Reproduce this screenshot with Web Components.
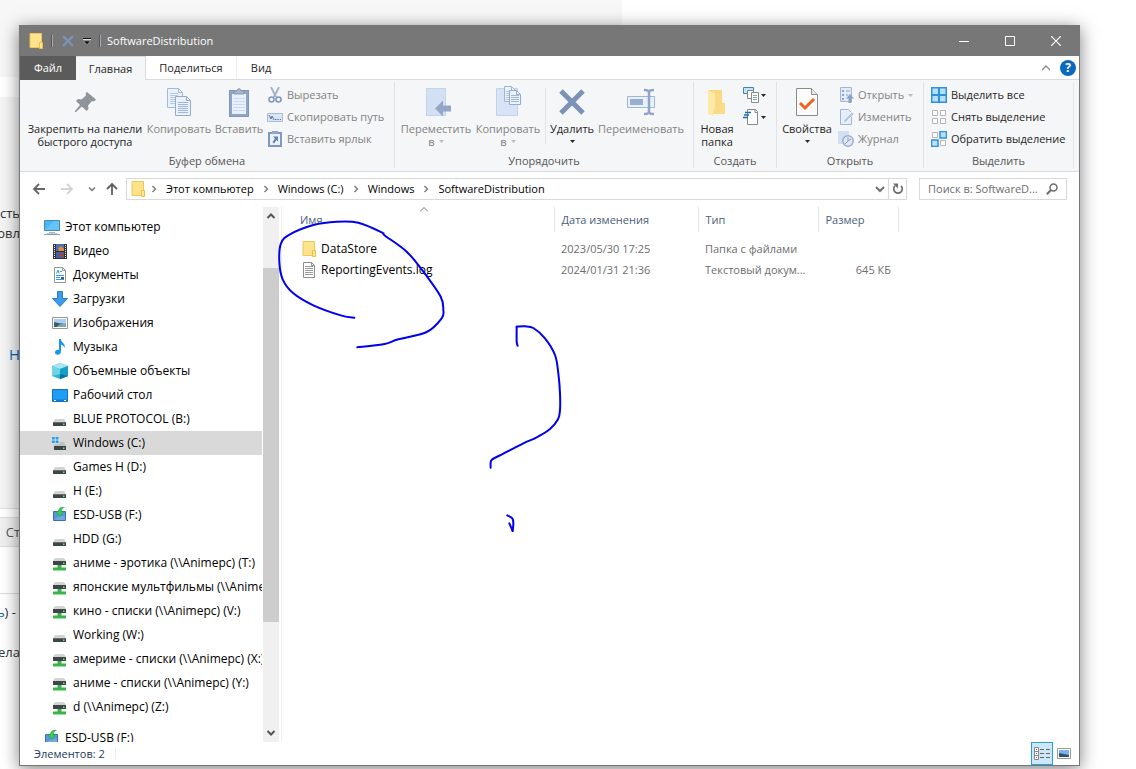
<!DOCTYPE html>
<html lang="ru">
<head>
<meta charset="utf-8">
<title>SoftwareDistribution</title>
<style>
  html, body { margin: 0; height: 100%; }
  body {
    display: grid; grid-template: minmax(0, 1fr) / minmax(0, 1fr);
    background: #fff; overflow: hidden;
    font: 11px/16px "Open Sans", "Noto Sans", sans-serif; color: #000;
  }
  body > * { grid-area: 1 / 1; }
  explorer-window { margin: 25px 56px 3px 19px; }
</style>
</head>
<body>
<page-backdrop></page-backdrop>
<explorer-window>
  <title-bar slot="title" heading="SoftwareDistribution"></title-bar>
  <ribbon-tabs slot="tabs"></ribbon-tabs>
  <ribbon-bar slot="ribbon">
    <ribbon-group label="Буфер обмена" style="--w:375px">
      <big-button icon="pin" label="Закрепить на панели|быстрого доступа" style="--w:120px"></big-button>
      <big-button icon="copy" label="Копировать" off style="--w:68px"></big-button>
      <big-button icon="paste" label="Вставить" off style="--w:52px"></big-button>
      <small-stack>
        <small-button icon="cut" label="Вырезать" off></small-button>
        <small-button icon="path" label="Скопировать путь" off></small-button>
        <small-button icon="shortcut" label="Вставить ярлык" off></small-button>
      </small-stack>
    </ribbon-group>
    <ribbon-group label="Упорядочить" style="--w:299px">
      <big-button icon="moveto" label="Переместить|в" arrow off style="--w:72px"></big-button>
      <big-button icon="copyto" label="Копировать|в" arrow off style="--w:72px"></big-button>
      <ribbon-line></ribbon-line>
      <big-button icon="delete" label="Удалить|" arrow style="--w:50px"></big-button>
      <big-button icon="rename" label="Переименовать" off style="--w:88px"></big-button>
    </ribbon-group>
    <ribbon-group label="Создать" style="--w:83px">
      <big-button icon="newfolder" label="Новая|папка" style="--w:36px"></big-button>
      <small-stack style="--m:8px">
        <small-button icon="newitem" name="Создать элемент" arrow></small-button>
        <small-button icon="easy" name="Простой доступ" arrow></small-button>
      </small-stack>
    </ribbon-group>
    <ribbon-group label="Открыть" style="--w:147px">
      <big-button icon="props" label="Свойства|" arrow style="--w:50px"></big-button>
      <small-stack style="--m:6px">
        <small-button icon="open" label="Открыть" arrow off></small-button>
        <small-button icon="edit" label="Изменить" off></small-button>
        <small-button icon="history" label="Журнал" off></small-button>
      </small-stack>
    </ribbon-group>
    <ribbon-group label="Выделить" style="--w:150px">
      <small-stack>
        <small-button icon="selall" label="Выделить все"></small-button>
        <small-button icon="selnone" label="Снять выделение"></small-button>
        <small-button icon="selinv" label="Обратить выделение"></small-button>
      </small-stack>
    </ribbon-group>
  </ribbon-bar>
  <address-row slot="address"></address-row>
  <nav-pane slot="nav">
    <nav-item icon="pc" root>Этот компьютер</nav-item>
    <nav-item icon="video">Видео</nav-item>
    <nav-item icon="docs">Документы</nav-item>
    <nav-item icon="down">Загрузки</nav-item>
    <nav-item icon="image">Изображения</nav-item>
    <nav-item icon="music">Музыка</nav-item>
    <nav-item icon="cube">Объемные объекты</nav-item>
    <nav-item icon="desktop">Рабочий стол</nav-item>
    <nav-item icon="drive">BLUE PROTOCOL (B:)</nav-item>
    <nav-item icon="windrive" selected>Windows (C:)</nav-item>
    <nav-item icon="drive">Games H (D:)</nav-item>
    <nav-item icon="drive">H (E:)</nav-item>
    <nav-item icon="usb">ESD-USB (F:)</nav-item>
    <nav-item icon="drive">HDD (G:)</nav-item>
    <nav-item icon="netdrive">аниме - эротика (\\Animepc) (T:)</nav-item>
    <nav-item icon="netdrive">японские мультфильмы (\\Animepc) (U:)</nav-item>
    <nav-item icon="netdrive">кино - списки (\\Animepc) (V:)</nav-item>
    <nav-item icon="drive">Working (W:)</nav-item>
    <nav-item icon="netdrive">америме - списки (\\Animepc) (X:)</nav-item>
    <nav-item icon="netdrive">аниме - списки (\\Animepc) (Y:)</nav-item>
    <nav-item icon="netdrive">d (\\Animepc) (Z:)</nav-item>
    <nav-item icon="usb" root gap>ESD-USB (F:)</nav-item>
  </nav-pane>
  <file-list slot="files"><ink-layer></ink-layer></file-list>
  <status-bar slot="status"></status-bar>
</explorer-window>

<script>
const define = (name, render) => customElements.define(name, class extends HTMLElement {
  connectedCallback() {
    if (this.shadowRoot) return;
    const root = this.attachShadow({ mode: 'open' });
    const t = document.createElement('template');
    t.innerHTML = '<style>:host,*{box-sizing:border-box}button{font:inherit;color:inherit;background:none;border:0;padding:0;margin:0;text-align:inherit}a{color:inherit;text-decoration:none}</style>' + render(this);
    root.append(t.content.cloneNode(true));
  }
});

/* Each icon: [width, height, markup] */
const drive = '<path d="M3 8h9l2 3H1z" fill="#d4d4d4"/><path d="M1 11h13v4H1z" fill="#3f4447"/><path d="M1 11h13v1H1z" fill="#6a6e70"/><path d="M11 12.500h1.500v1.500H11z" fill="#4f6"/>';
const netdrive = '<path d="M3 3h9l2 3H1z" fill="#d4d4d4"/><path d="M1 6h13v4H1z" fill="#3f4447"/><path d="M11 7.500h1.500v1.500H11z" fill="#4f6"/><path d="M5.500 10h4v2.500H14V15H1v-2.500h4.500z" fill="#39b54a"/><path d="M1 15h13v1H1z" fill="#9ed8a4"/>';
const usb = '<path d="M1.500 4.500h12v9h-12z" fill="#5b97d6" stroke="#3d70ad"/><path d="M3 12l4-3h6v4H3z" fill="#7fb4ea" opacity=".6"/><path d="M12.500 0C8 0 6.500 2 6.500 4.500H4L7.800 9.500l3.700-5H9.300C9.300 2.500 10 1.200 12.500 0z" fill="#35cf55" stroke="#1c9a3c" stroke-width=".6"/>';
const folder = '<path d="M1 .5h11.500v14H1z" fill="#ffe28c" stroke="#ecc85a"/><path d="M10.500 9.500h3v6h-3z" fill="#ffe79d" stroke="#ecbf3f"/>';
const sheet = (x, y, w, h, f, s, c = 4) => `<path d="M${x} ${y}h${w - c}l${c} ${c}v${h - c}h-${w}z" fill="${f}" stroke="${s}"/><path d="M${x + w - c} ${y}v${c}h${c}" fill="none" stroke="${s}"/>`;
const lines = (x, y, w, n, s, step = 2) => Array.from({ length: n }, (_, i) => `<path d="M${x} ${y + i * step}h${w}" stroke="${s}"/>`).join('');
const I = {
  folder: [14, 16, folder],
  pin: [32, 32, '<path d="M18 6l9 7.500-2 2-2-.500-4 4.500.500 3.500-2 2-4.700-4.500L7 26H6v-1l5-6-4-4 2-2 3.500.500 4.500-4-.500-2z" fill="#8f949a"/>'],
  copy: [32, 32, sheet(4.5, 2.5, 15, 19, '#eaf1fb', '#a5bad6') + lines(7, 7.5, 8, 6, '#b9cbe4') + sheet(12.5, 10.5, 15, 19, '#eaf1fb', '#94abcb') + lines(15, 16.5, 10, 6, '#9fb6d8')],
  paste: [32, 32, '<rect x="6.500" y="4.500" width="19" height="26" fill="#8ea4c8" stroke="#7f97bd"/><path d="M9 8h14v20H9z" fill="#e9f1fc"/>' + lines(10, 12.5, 12, 5, '#c9d9ef', 3) + '<path d="M11 8V5h3c0-3 4-3 4 0h3v3z" fill="#a9b7cd" stroke="#8698b5"/>'],
  cut: [16, 16, '<path d="M4 0l5 10M12 0L7 10" stroke="#9fb1cd" stroke-width="1.800"/><circle cx="4.500" cy="12.500" r="2.500" fill="none" stroke="#8298bd" stroke-width="1.600"/><circle cx="11.500" cy="12.500" r="2.500" fill="none" stroke="#8298bd" stroke-width="1.600"/>'],
  path: [16, 16, '<path d="M.5 4.500h15v8H.5z" fill="#dbe6f5" stroke="#a9bbd6"/><path d="M2 6l2 4 1-3 2 4M8 10.500h1.500M10.500 10.500H12M13 10.500h1" fill="none" stroke="#5d779f"/>'],
  shortcut: [16, 16, '<path d="M2 2h12v13H2z" fill="#e9f1fc" stroke="#8099c1" stroke-width="2"/><path d="M5 0h6v3H5z" fill="#90a5c8"/><path d="M6 5.500h5v5L9.500 9 7 12.500 5.500 11 8 7.500z" fill="#6480ad"/>'],
  moveto: [32, 32, '<path d="M6 2h20v28H6z" fill="#d3e0f4"/><path d="M6.500 2.500h19v27h-19z" fill="none" stroke="#c3d3ec"/><path d="M15 22.500l8-8v5h8v6h-8v5z" fill="#93a7c9"/>'],
  copyto: [32, 32, '<path d="M4.500 2.500h21v27h-21z" fill="#d8e4f6" stroke="#c3d3ec"/>' + sheet(12.5, .5, 11, 15, '#edf3fc', '#9fb3d2') + lines(14, 5.5, 7, 5, '#b0c3df') + sheet(17.5, 4.5, 11, 14, '#edf3fc', '#94abcb') + lines(19, 9.5, 8, 4, '#9fb6d8')],
  delete: [32, 32, '<path d="M5 5l22 22M27 5L5 27" stroke="#7c92b7" stroke-width="5"/>'],
  rename: [32, 32, '<path d="M2.500 10.500h27v11h-27z" fill="#e9f1fc" stroke="#9fb5d6"/><path d="M5 13h13v6H5z" fill="#98aed2"/><path d="M19 4c3 0 5 0 5 3v18c0 3-2 3-5 3M29 4c-3 0-5 0-5 3v18c0 3 2 3 5 3" fill="none" stroke="#8ea4c8" stroke-width="2.500"/>'],
  newfolder: [32, 32, '<path d="M7 4h14v13h3v11H9z" fill="#f9d77c"/><path d="M7 4l7 3v16l-2 7-5-2z" fill="#ffe9a6"/><path d="M14 7h7v10l3 2v9H12l2-5z" fill="#fadb85"/>'],
  newitem: [16, 16, '<path d="M.5.500h10v6H.5z" fill="#bfe3f7" stroke="#3a86b5"/><path d="M4.500 3.500h6v8h-6z" fill="#fff" stroke="#8a8a8a"/><path d="M8.500 5.500h7v10h-7z" fill="#fff" stroke="#8a8a8a"/><path d="M10 8.500h4M10 10.500h4M10 12.500h4" stroke="#6fb0a8"/>'],
  easy: [16, 16, '<path d="M4.500.500h8l2 2v13h-10z" fill="#fff" stroke="#8a8a8a"/><path d="M12 .5v3h3" fill="none" stroke="#8a8a8a"/><path d="M2 3.500h6M1 6h5M0 8.500h5" stroke="#1b6fae" stroke-width="1.500"/>'],
  props: [32, 32, '<path d="M5.500 2.500h15l6 6v21h-21z" fill="#fbfbfb" stroke="#8c8c8c"/><path d="M20.500 2.500v6h6" fill="#e6e6e6" stroke="#8c8c8c"/><path d="M9 17l5 5 9-9" fill="none" stroke="#f0621e" stroke-width="3"/>'],
  open: [16, 16, '<path d="M2.500.500h11v14h-11z" fill="#e3ecf9" stroke="#a4b6d3"/><path d="M4 3h2v2H4zM4 7h2v2H4zM4 11h2v2H4zM8 3.500h4v1H8zM8 7.500h2v1H8z" fill="#8ea4c8"/><path d="M12 7l4 4.500h-2.500V16h-3v-4.500H8z" fill="#8ba1c6"/>'],
  edit: [16, 16, '<path d="M2.500.500h8l3 3v12h-11z" fill="#e5eefa" stroke="#a0b4d4"/><path d="M5 14l1-3 8-8 2 2-8 8z" fill="#b3c5e0" stroke="#fff" stroke-width=".6"/>'],
  history: [16, 16, '<path d="M0 0h11v13H0z" fill="#d3e0f3"/><circle cx="10" cy="10" r="5.200" fill="#dfe7f3" stroke="#9dafcd" stroke-width="1.500"/><path d="M7 13l3-3V6.500M10 10l3-2" fill="none" stroke="#8c9fc0"/>'],
  selall: [16, 16, '<path d="M0 0h16v16H0z" fill="#2f8fe0"/><path d="M1.500 1.500h5.500v5.500h-5.500zM9 1.500h5.500v5.500H9zM1.500 9h5.500v5.500h-5.500zM9 9h5.500v5.500H9z" fill="#b5e1ff"/>'],
  selnone: [16, 16, '<path d="M1.500 1.500h5v5h-5zM9.500 1.500h5v5h-5zM1.500 9.500h5v5h-5zM9.500 9.500h5v5h-5z" fill="#fff" stroke="#b4b4b4"/>'],
  selinv: [16, 16, '<path d="M1.500 1.500h5v5h-5zM9.500 9.500h5v5h-5z" fill="#fff" stroke="#b4b4b4"/><path d="M9 .5h6.500V7H9zM.5 9H7v6.500H.5z" fill="#b5e1ff" stroke="#2f8fe0" stroke-width="1.500"/>'],
  pc: [16, 16, '<path d="M.5 1.500h15v10H.5z" fill="#4fb5f2" stroke="#3e8fae"/><path d="M1 11L10 2h5v9z" fill="#7accfa" opacity=".6"/><path d="M5 13h6v1H5z" fill="#a7b4bd"/><path d="M0 15h16v1H0z" fill="#8b98a5"/><path d="M3 14h10v1H3z" fill="#c6ced4"/>'],
  video: [16, 16, '<path d="M1 1h14v15H1z" fill="#333"/><path d="M4 1h8v7H4z" fill="#4b6fb5"/><path d="M4 9h8v6H4z" fill="#3d62ab"/><path d="M6 5l3-2 3 3v2H7z" fill="#e2883f"/><path d="M6 13l3-3 3 2v2z" fill="#a8442e"/><path d="M2.500 2v14M13.500 2v14" stroke="#eee" stroke-dasharray="1 1"/>'],
  docs: [16, 16, sheet(2.5, .5, 11, 15, '#fff', '#8f979d', 3) + '<path d="M4.500 6.500L6 3l1 3.500M8 4.500h2M4 8.500h8M4 12.500h8M4 10.500h4" fill="none" stroke="#2f9bd8"/><path d="M9 10h3v2H9z" fill="#555"/>'],
  down: [16, 16, '<path d="M5.500.500h5v7h5L8 15.500.5 7.500h5z" fill="#3d9be9" stroke="#2a7cc4"/>'],
  image: [16, 16, '<path d="M.5 2.500h15v11H.5z" fill="#fff" stroke="#969696"/><path d="M2 4h12v8H2z" fill="#a9cdf3"/><path d="M2 7l4 1 8 1v3H2z" fill="#3a5d68"/><path d="M7 9.500l7-1V12H5z" fill="#7fa8ae"/>'],
  music: [16, 16, '<path d="M7 0h2c0 4 5 4 3.500 9-.5-2-2-3-3.500-3.500V12c0 5-6 4.500-6 1.500 0-2 2-3 4-2.500z" fill="#1398ee"/>'],
  cube: [16, 16, '<path d="M8 0l8 3v10l-8 3-8-3V3z" fill="#29b6d3"/><path d="M8 0l8 3-8 3-8-3z" fill="#a8e6f0"/><path d="M8 6l8-3v10l-8 3z" fill="#169fc6"/><path d="M0 3l8 3v5l-8 2z" fill="#6fd3e4"/><path d="M8 11l8 2-8 3z" fill="#0b6f9d"/>'],
  desktop: [16, 16, '<path d="M.5 2.500h15v12H.5z" fill="#1e9df3" stroke="#1272bd"/><path d="M1 12.500h14v2H1z" fill="#1479c9"/><path d="M2 13.500h2M12 13.500h2" stroke="#fff"/>'],
  drive: [16, 16, drive],
  windrive: [16, 16, '<path d="M4 7h8l2 4H2z" fill="#c0c0c0"/><path d="M2 11h12v4H2z" fill="#3f4447"/><path d="M11 12.500h1.500v1.500H11z" fill="#4f6"/><path d="M-.5 2h8v7h-8z" fill="#d9d9d9"/><path d="M0 2h2.700v2.500H0zM3.700 2h2.700v2.500H3.700zM0 5.500h2.700V8H0zM3.700 5.500h2.700V8H3.700z" fill="#16a1f2"/>'],
  netdrive: [16, 16, netdrive],
  usb: [16, 16, usb],
  log: [14, 16, sheet(1.5, .5, 11, 15, '#fff', '#8f8f8f', 3) + lines(3, 4.5, 8, 5, '#9a9a9a')],
  back: [14, 14, '<path d="M13 7H2M7 2L2 7l5 5" fill="none" stroke="#666" stroke-width="1.800"/>'],
  fwd: [14, 14, '<path d="M1 7h11M7 2l5 5-5 5" fill="none" stroke="#d4d4d4" stroke-width="1.800"/>'],
  up: [14, 14, '<path d="M7 13V2M2 7l5-5 5 5" fill="none" stroke="#5f5f5f" stroke-width="1.800"/>'],
  vsmall: [8, 8, '<path d="M1 2.500l3 3 3-3" fill="none" stroke="#777" stroke-width="1.500"/>'],
  crumb: [8, 8, '<path d="M2.500 1l3 3-3 3" fill="none" stroke="#777" stroke-width="1.400"/>'],
  vbig: [10, 8, '<path d="M1 2l4 4 4-4" fill="none" stroke="#707070" stroke-width="2"/>'],
  refresh: [12, 12, '<path d="M3 2.800a4.300 4.300 0 1 0 6 0" fill="none" stroke="#6d6d6d" stroke-width="1.700"/><path d="M1 .5h5V5.500z" fill="#6d6d6d"/>'],
  find: [12, 12, '<circle cx="7.500" cy="4.500" r="3.500" fill="none" stroke="#6d6d6d" stroke-width="1.500"/><path d="M5 7L.8 11.200" stroke="#6d6d6d" stroke-width="2"/>'],
  tri: [5, 3, '<path d="M0 0h5L2.500 3z" fill="currentColor"/>'],
  x: [14, 14, '<path d="M2 2l10 10M12 2L2 12" stroke="#7c92b9" stroke-width="2.400"/>'],
  qat: [8, 8, '<path d="M0 1.500h8" stroke="#111"/><path d="M0 2.500h8" stroke="#ddd"/><path d="M.5 4h7L4 7.500z" fill="#000" stroke="#ddd" stroke-width=".5"/>'],
  min: [10, 10, '<path d="M0 5.500h10" stroke="#fff"/>'],
  max: [10, 10, '<path d="M.5.500h9v9h-9z" fill="none" stroke="#fff"/>'],
  close: [10, 10, '<path d="M0 0l10 10M10 0L0 10" stroke="#fff" stroke-width="1.200"/>'],
  caret: [8, 8, '<path d="M0 6l4-4 4 4" fill="none" stroke="#8c8c8c" stroke-width="1.300"/>'],
  sort: [8, 5, '<path d="M0 4.500l4-4 4 4" fill="none" stroke="#777"/>'],
  sup: [10, 10, '<path d="M1.500 7L5 3.500 8.500 7" fill="none" stroke="#555" stroke-width="2"/>'],
  sdown: [10, 10, '<path d="M1.500 3L5 6.500 8.500 3" fill="none" stroke="#555" stroke-width="2"/>'],
  details: [16, 14, '<path d="M.5.500h4v12h-4zM.5 4.500h4M.5 8.500h4" fill="#fff" stroke="#888"/><path d="M6 2.500h4M12 2.500h4M6 6.500h4M12 6.500h4M6 10.500h4M12 10.500h4" stroke="#666"/><path d="M2 2h1v1H2zM2 6h1v1H2zM2 10h1v1H2z" fill="#b4504b"/>'],
  thumbs: [14, 11, '<path d="M.5.500h13v10H.5z" fill="#fff" stroke="#999"/><path d="M2 2h10v7H2z" fill="#7db2f2"/><path d="M2 5l10 2v2H2z" fill="#2c5566"/>'],
};
define('x-icon', el => {
  const [w, h, m] = I[el.getAttribute('name')];
  return `<style>:host{display:block;flex:none;width:${w}px;height:${h}px}svg{display:block}</style><svg width="${w}" height="${h}" viewBox="0 0 ${w} ${h}" aria-hidden="true">${m}</svg>`;
});

define('page-backdrop', () => `<style>
  :host{display:grid;grid-template-rows:77px 20px 412px 8px 30px 46px 1fr;color:#333;font-size:13px;line-height:20px;overflow:hidden}
  .top{background:#f7f7f7;width:622px}
  .strip{width:20px;overflow:hidden;display:flex;flex-direction:column;align-items:flex-end;white-space:nowrap}
  .body{background:#f5f5f5;padding-top:106px;border-bottom:1px solid #e0e0e0}
  .link{color:#0067b8;font-size:15px;margin-top:101px}
  .tab{background:#f0f0f0;border:1px solid #ddd;border-width:1px 0;justify-content:center;color:#555}
  .post{border-top:1px solid #ddd;padding-top:8px}
  .dash{margin-right:4px}.dash a{color:#0067b8}.more{margin-top:20px}
</style><div class="top"></div><div></div>
<div class="strip body"><span>сть</span><span>овл</span><a class="link" href="#">Н</a></div><div></div>
<div class="strip tab"><span>Ст</span></div><div></div>
<div class="strip post"><span class="dash"><a href="#">ь</a>) -</span><span class="more">ела</span></div>`);

define('explorer-window', () => `<style>
  :host{display:flex;flex-direction:column;min-height:0;position:relative;background:#fff;border:1px solid #777;border-top:0;box-shadow:0 3px 16px rgba(0,0,0,.5)}
  main{flex:1;min-height:0;display:grid;grid-template:minmax(0,1fr) / 259px minmax(0,1fr);padding-top:1px}
  ::slotted(:not([slot=nav]):not([slot=files])){flex:none}
</style><slot name="title"></slot><slot name="tabs"></slot><slot name="ribbon"></slot><slot name="address"></slot>
<main><slot name="nav"></slot><slot name="files"></slot></main><slot name="status"></slot>`);

define('title-bar', el => `<style>
  :host{display:flex;align-items:center;height:31px;background:#777;color:#fff;padding-left:9px}
  .quick{display:flex;align-items:center;gap:8px}
  i{width:2px;height:12px;background:#555;border-right:1px solid #aaa}
  h1{font:inherit;margin:0 auto 0 6px}
  .ctl{width:46px;height:31px;display:grid;place-items:center}
  button{display:block}
</style><div class="quick"><x-icon name="folder"></x-icon><i></i><button aria-label="Удалить"><x-icon name="x"></x-icon></button><button aria-label="Настройка панели"><x-icon name="qat"></x-icon></button><i></i></div>
<h1>${el.getAttribute('heading')}</h1>
<button class="ctl" aria-label="Свернуть"><x-icon name="min"></x-icon></button><button class="ctl" aria-label="Развернуть"><x-icon name="max"></x-icon></button><button class="ctl" aria-label="Закрыть"><x-icon name="close"></x-icon></button>`);

define('ribbon-tabs', () => `<style>
  :host{display:flex;height:24px;background:linear-gradient(#dadbdc,#dadbdc) bottom/100% 1px no-repeat #fff}
  button{height:24px;text-align:center;color:#262626}
  .file{width:56px;background:#5b5b5b;color:#fff}
  .on{width:70px;background:#f5f6f7;border:1px solid #dadbdc;border-width:1px 1px 0 0}
  .share{width:91px;border:1px solid #ececec;border-width:0 1px 0 0;height:23px}
  .view{width:48px}
  .end{margin-left:auto;display:flex;align-items:center;gap:10px;padding-right:3px;height:23px}
  .end button{height:8px}
  .end .help{width:16px;height:16px;border-radius:50%;background:#0b69bd;color:#fff;font-weight:700;font-size:12px;line-height:16px}
</style><button class="file">Файл</button><button class="on">Главная</button><button class="share">Поделиться</button><button class="view">Вид</button>
<div class="end"><button aria-label="Свернуть ленту"><x-icon name="caret"></x-icon></button><button class="help">?</button></div>`);

define('ribbon-bar', () => `<style>:host{display:flex;height:92px;background:#f5f6f7;border-bottom:1px solid #dadbdc;padding:2px 0 3px}</style><slot></slot>`);
define('ribbon-group', el => `<style>
  :host{display:flex;flex-direction:column;flex:none;width:var(--w);border-right:1px solid #e2e3e4}
  .items{display:flex;flex:1;padding:2px 5px 0;min-height:0}
  footer{text-align:center;color:#555;line-height:14px;white-space:nowrap}
</style><div class="items"><slot></slot></div><footer>${el.getAttribute('label')}</footer>`);
define('ribbon-line', () => `<style>:host{display:block;width:1px;height:56px;background:#e2e3e4;margin:4px 1px 0}</style>`);
define('small-stack', () => `<style>:host{display:flex;flex-direction:column;margin-left:var(--m,2px)}</style><slot></slot>`);
define('big-button', el => {
  const [a, b] = el.getAttribute('label').split('|'), off = el.hasAttribute('off');
  return `<style>:host{display:block;width:var(--w);padding-top:2px;color:${off ? '#838383' : '#262626'};flex:none}
  button{display:flex;flex-direction:column;align-items:center;width:100%;white-space:nowrap;line-height:13px}
  .l{margin-top:4px}.s{display:flex;align-items:center;gap:4px;height:13px}
  x-icon[name=tri]{opacity:${off ? .5 : 1}}</style>
  <button ${off ? 'disabled' : ''}><x-icon name="${el.getAttribute('icon')}"></x-icon><span class="l">${a}</span>${b !== undefined ? `<span class="s">${b}${el.hasAttribute('arrow') ? '<x-icon name="tri"></x-icon>' : ''}</span>` : ''}</button>`;
});
define('small-button', el => {
  const off = el.hasAttribute('off'), l = el.getAttribute('label');
  return `<style>:host{display:block;color:${off ? '#838383' : '#262626'}}
  button{display:flex;align-items:center;gap:${l ? 4 : 2}px;height:22px;white-space:nowrap}
  x-icon[name=tri]{opacity:${off ? .5 : 1}}</style>
  <button ${off ? 'disabled' : ''} ${l ? '' : `aria-label="${el.getAttribute('name')}"`}><x-icon name="${el.getAttribute('icon')}"></x-icon>${l ? `<span>${l}</span>` : ''}${el.hasAttribute('arrow') ? '<x-icon name="tri"></x-icon>' : ''}</button>`;
});

define('address-row', () => `<style>
  :host{display:flex;align-items:center;height:34px;padding:0 12px}
  .nav{display:flex;align-items:center;width:94px;gap:14px}
  .nav button:nth-child(3){margin-right:-5px}
  .box{flex:1;display:flex;align-items:center;height:22px;border:1px solid #d9d9d9;padding-left:4px}
  .box>x-icon{margin-right:5px}
  nav{display:flex;align-items:center;gap:8px;flex:1;white-space:nowrap}
  .re{width:18px;height:20px;border-left:1px solid #d9d9d9;display:grid;place-items:center;margin-left:3px}
  label{display:flex;align-items:center;width:148px;height:22px;border:1px solid #d9d9d9;margin-left:12px;padding:0 8px}
  input{font:inherit;color:#6d6d6d;border:0;outline:0;padding:0;width:100%;min-width:0;background:none}
  input::placeholder{color:#6d6d6d;opacity:1}
</style><div class="nav"><button aria-label="Назад"><x-icon name="back"></x-icon></button><button aria-label="Вперед"><x-icon name="fwd"></x-icon></button><button aria-label="Последние"><x-icon name="vsmall"></x-icon></button><button aria-label="Вверх"><x-icon name="up"></x-icon></button></div>
<div class="box"><x-icon name="folder"></x-icon><nav><x-icon name="crumb"></x-icon><a href="#">Этот компьютер</a><x-icon name="crumb"></x-icon><a href="#">Windows (C:)</a><x-icon name="crumb"></x-icon><a href="#">Windows</a><x-icon name="crumb"></x-icon><a href="#">SoftwareDistribution</a></nav>
<button aria-label="Журнал адресов"><x-icon name="vbig"></x-icon></button><button class="re" aria-label="Обновить"><x-icon name="refresh"></x-icon></button></div>
<label><input type="text" aria-label="Поиск" placeholder="Поиск в: SoftwareD..."><x-icon name="find"></x-icon></label>`);

define('nav-pane', () => `<style>
  :host{display:grid;grid-template:minmax(0,1fr) / 242px 16px;gap:1px;font-size:12px}
  .tree{overflow:hidden;padding-top:8px}
  .bar{background:#f0f0f0;display:grid;grid-template-rows:61px 354fr 120fr;justify-items:center}
  .thumb{background:#cdcdcd;width:16px}
  button{width:16px;height:18px;display:grid;place-items:center}
  .dn{align-self:end}
</style><div class="tree"><slot></slot></div><div class="bar"><button aria-label="Вверх"><x-icon name="sup"></x-icon></button><div class="thumb"></div><button class="dn" aria-label="Вниз"><x-icon name="sdown"></x-icon></button></div>`);
define('nav-item', el => `<style>
  :host{display:block;margin-top:${el.hasAttribute('gap') ? 7 : 0}px;background:${el.hasAttribute('selected') ? '#d9d9d9' : 'none'}}
  a{display:flex;align-items:center;gap:5px;height:24px;white-space:nowrap;padding-left:${el.hasAttribute('root') ? 24 : 32}px}
</style><a href="#"><x-icon name="${el.getAttribute('icon')}"></x-icon><span><slot></slot></span></a>`);

define('file-list', () => `<style>
  :host{display:block;position:relative;padding-left:2px}
  .edge{border-left:1px solid #f0f0f0;height:100%}
  table{border-collapse:collapse;table-layout:fixed;width:616px;color:#6d6d6d}
  th{font-weight:400;text-align:left;height:25px;padding:0 0 0 7px;border-right:1px solid #e5e5e5;color:#4c607a;position:relative}
  th:first-child{padding-left:18px}
  th x-icon{position:absolute;top:0;left:50%;margin-left:2px}
  td{height:21px;padding:0 7px;white-space:nowrap}
  tbody::before{content:"";display:table-row;height:6px}
  td:first-child{padding-left:20px;color:#000;font-size:12px}
  td:last-child{text-align:right}
  .n{display:flex;align-items:center;gap:5px}
</style><div class="edge"><table><colgroup><col style="width:272px"><col style="width:144px"><col style="width:120px"><col style="width:80px"></colgroup>
<thead><tr><th>Имя<x-icon name="sort"></x-icon></th><th>Дата изменения</th><th>Тип</th><th>Размер</th></tr></thead>
<tbody><tr><td><div class="n"><x-icon name="folder"></x-icon>DataStore</div></td><td>2023/05/30 17:25</td><td>Папка с файлами</td><td></td></tr>
<tr><td><div class="n"><x-icon name="log"></x-icon>ReportingEvents.log</div></td><td>2024/01/31 21:36</td><td>Текстовый докум...</td><td>645 КБ</td></tr></tbody></table></div><slot></slot>`);

/* Pen strokes drawn over the list: point runs joined by smooth curves. */
const strokes = [
  [[253,353],[215,347],[130,316],[70,280],[38,238],[28,185],[33,130],[60,103],[130,75],[200,65],[265,68],[335,97],[345,107],[410,155],[460,215],[512,290],[520,330],[515,355],[470,396],[385,418],[340,433],[262,442]],
  [[743,437],[740,425],[740,380]],
  [[740,380],[765,379],[790,384],[825,415],[855,465],[865,520],[870,580],[870,630],[864,658],[840,687],[800,712],[760,730],[700,761],[667,778],[662,788],[662,803]],
  [[712,946],[727,955],[730,970],[728,993]],
  [[728,993],[718,970]],
];
const curve = p => p.reduce((d, c, i) => {
  if (!i) return `M${c}`;
  const a = p[i - 2] || p[i - 1], b = p[i - 1], e = p[i + 1] || c;
  return d + `C${b[0] + (c[0] - a[0]) / 6},${b[1] + (c[1] - a[1]) / 6} ${c[0] - (e[0] - b[0]) / 6},${c[1] - (e[1] - b[1]) / 6} ${c}`;
}, '');
define('ink-layer', () => `<style>:host{position:absolute;left:0;top:0;width:300px;height:340px;pointer-events:none}svg{display:block;overflow:visible}</style>
<svg width="300" height="340" viewBox="27 21 900 1020" fill="none" stroke="#0000f0" stroke-width="6" stroke-linecap="round" stroke-linejoin="round">${strokes.map(s => `<path d="${curve(s)}"/>`).join('')}</svg>`);

define('status-bar', () => `<style>
  :host{display:flex;align-items:center;height:23px;color:#1e395b;padding:0 4px 0 14px}
  .sep{width:1px;height:12px;background:#eee;margin-left:10px}
  .v{display:flex;margin-left:auto}
  button{width:22px;height:23px;display:grid;place-items:center}
  .on{background:#cce8f6;border:1px solid #26a0da}
</style><span>Элементов: 2</span><div class="sep"></div><div class="v"><button class="on" aria-label="Таблица"><x-icon name="details"></x-icon></button><button aria-label="Эскизы"><x-icon name="thumbs"></x-icon></button></div>`);
</script>
</body>
</html>
